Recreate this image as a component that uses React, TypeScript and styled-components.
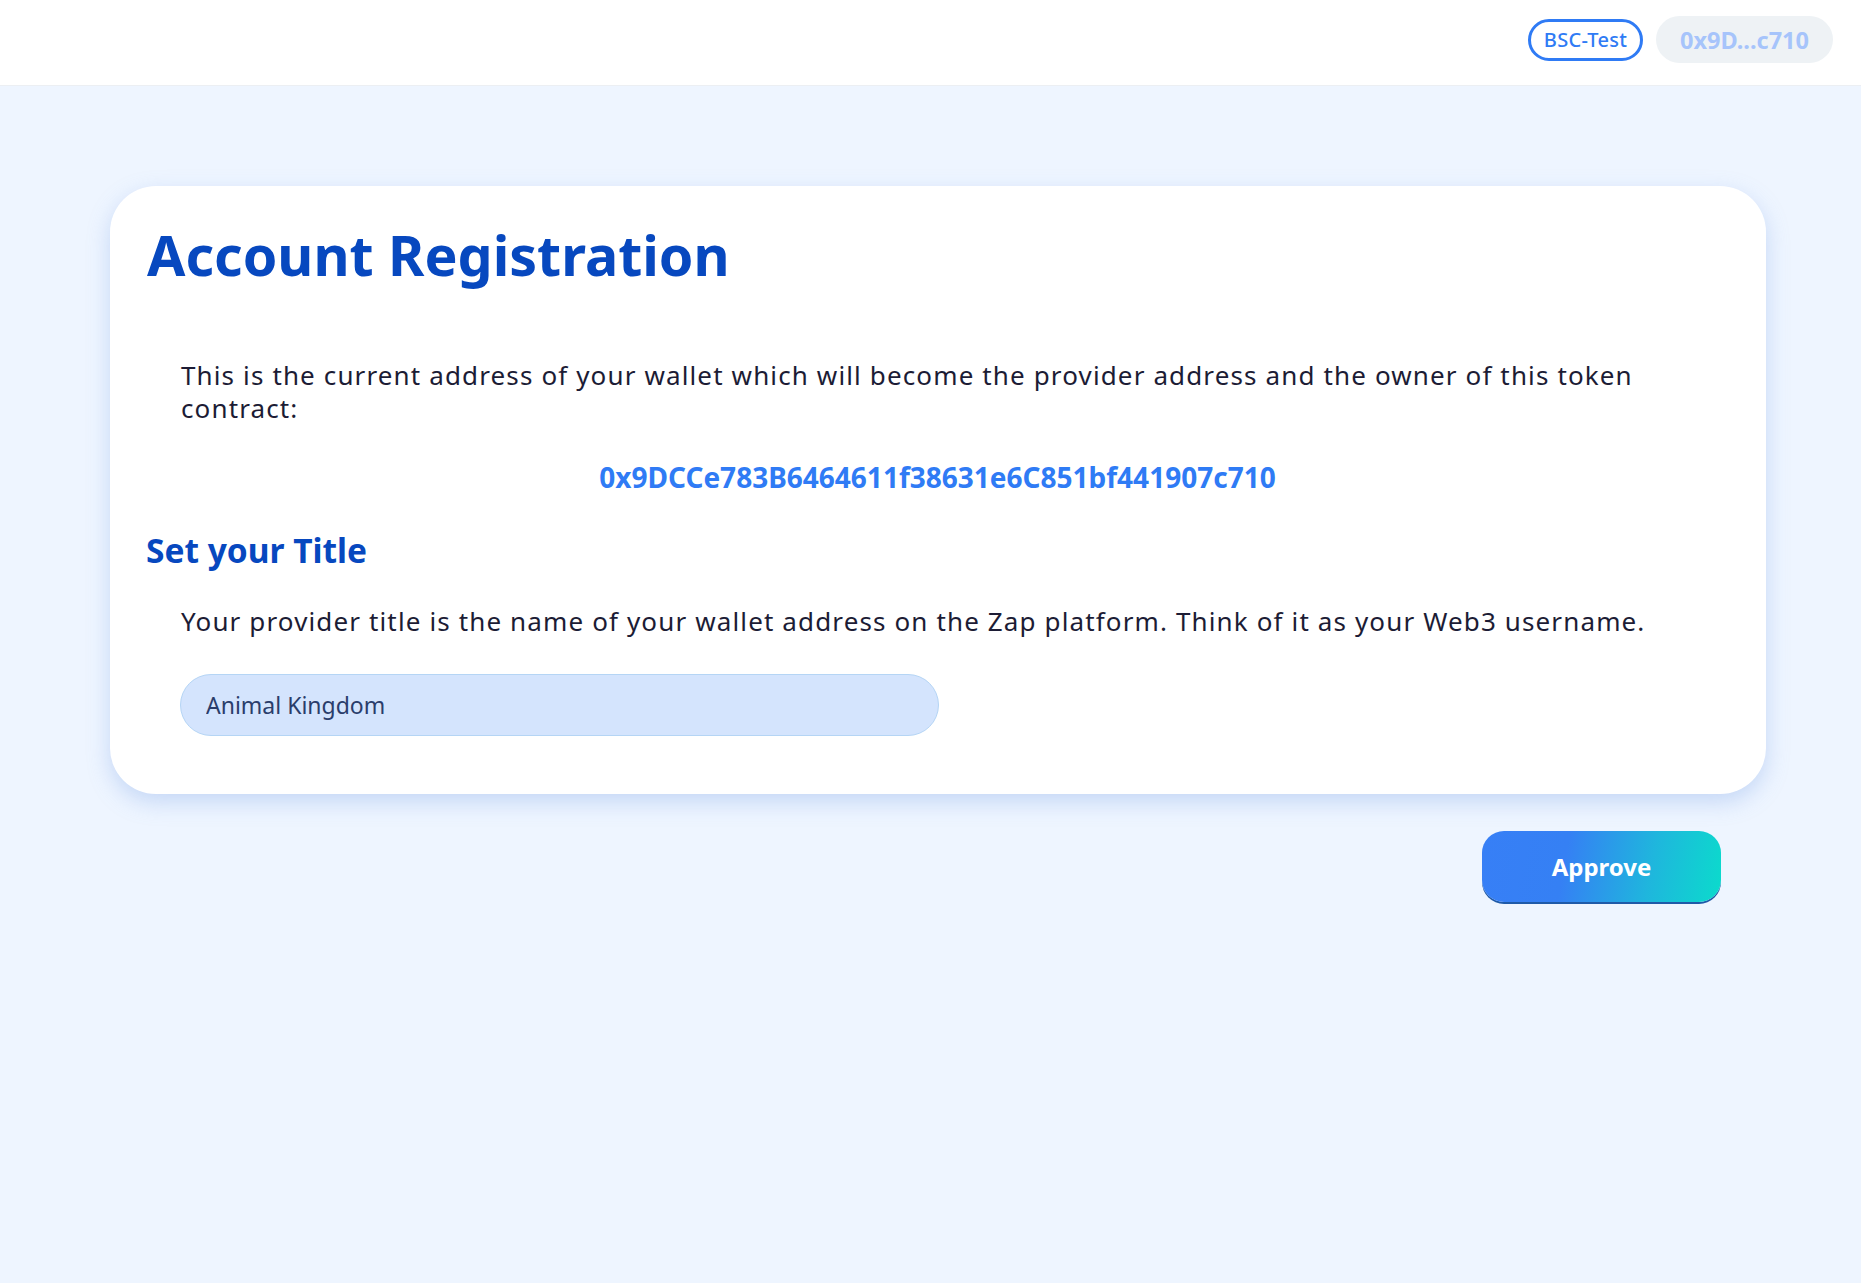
import React from "react";
import styled, { createGlobalStyle } from "styled-components";

const Global = createGlobalStyle`
  html, body { margin: 0; padding: 0; }
  body {
    background: #eef5ff;
    font-family: "Noto Sans", "Open Sans", sans-serif;
    min-height: 1283px;
  }
`;

const Page = styled.div`
  min-height: 1283px;
  background: #eef5ff;
`;

const Header = styled.header`
  height: 86px;
  background: #ffffff;
  border-bottom: 1px solid #eceff3;
  box-sizing: border-box;
  display: flex;
  align-items: center;
  justify-content: flex-end;
  gap: 13px;
  padding: 0 28px 6px 0;
`;

const NetworkPill = styled.div`
  width: 115px;
  height: 42px;
  box-sizing: border-box;
  border: 3px solid #2f7bf5;
  border-radius: 21px;
  display: flex;
  align-items: center;
  justify-content: center;
  color: #2f7bf5;
  font-size: 20px;
  font-weight: 500;
  letter-spacing: 0.3px;
`;

const AddressPill = styled.div`
  height: 47px;
  width: 177px;
  box-sizing: border-box;
  border-radius: 24px;
  background: #eef2f5;
  display: flex;
  align-items: center;
  justify-content: center;
  color: #a6c4fb;
  font-size: 23.5px;
  font-weight: 700;
`;

const Main = styled.main`
  padding: 100px 95px 0 110px;
  display: flex;
  flex-direction: column;
`;

const Card = styled.section`
  background: #ffffff;
  border-radius: 46px;
  box-shadow: 0 8px 22px rgba(120, 160, 230, 0.35);
  padding: 35px 37px 58px 36px;
  display: flex;
  flex-direction: column;
`;

const Title = styled.h1`
  margin: 0 0 0 1px;
  color: #0748bf;
  font-size: 55.5px;
  font-weight: 700;
  line-height: 68px;
`;

const Paragraph = styled.p<{ $top: number }>`
  margin: ${(p) => p.$top}px 0 0 35px;
  max-width: 1500px;
  color: #1c1c35;
  font-size: 26px;
  line-height: 33px;
  font-weight: 400;
  letter-spacing: 1.13px;
`;

const WalletAddress = styled.div`
  margin-top: 34px;
  text-align: center;
  color: #2f7bf5;
  font-size: 28px;
  font-weight: 700;
  line-height: 36px;
`;

const SubTitle = styled.h2`
  margin: 35px 0 0 0;
  color: #0748bf;
  font-size: 33.5px;
  font-weight: 700;
  line-height: 40px;
`;

const TitleInput = styled.input`
  margin: 36px 0 0 34px;
  width: 759px;
  height: 62px;
  box-sizing: border-box;
  border-radius: 31px;
  border: 1px solid #b5d5f5;
  background: #d4e4fd;
  padding: 0 25px;
  font-family: "Noto Sans", "Open Sans", sans-serif;
  font-size: 23px;
  color: #2a3d6b;
  outline: none;
  caret-color: #1c2c55;
`;

const Actions = styled.div`
  display: flex;
  justify-content: flex-end;
  padding: 37px 45px 0 0;
`;

const ApproveButton = styled.button`
  width: 239px;
  height: 71px;
  border: none;
  border-radius: 22px;
  background: linear-gradient(100deg, #377ff6 0%, #3580f4 35%, #1fb6dd 70%, #0bdbcc 100%);
  box-shadow: 0 2px 0 #1f5aa8;
  color: #ffffff;
  font-family: "Noto Sans", "Open Sans", sans-serif;
  font-size: 24px;
  font-weight: 700;
  cursor: pointer;
`;

export default function App() {
  return (
    <Page>
      <Global />
      <Header>
        <NetworkPill>BSC-Test</NetworkPill>
        <AddressPill>0x9D...c710</AddressPill>
      </Header>
      <Main>
        <Card>
          <Title>Account Registration</Title>
          <Paragraph $top={70}>
            This is the current address of your wallet which will become the provider address and the owner of this token
            contract:
          </Paragraph>
          <WalletAddress>0x9DCCe783B6464611f38631e6C851bf441907c710</WalletAddress>
          <SubTitle>Set your Title</SubTitle>
          <Paragraph $top={35}>
            Your provider title is the name of your wallet address on the Zap platform. Think of it as your Web3 username.
          </Paragraph>
          <TitleInput defaultValue="Animal Kingdom" autoFocus />
        </Card>
        <Actions>
          <ApproveButton>Approve</ApproveButton>
        </Actions>
      </Main>
    </Page>
  );
}
